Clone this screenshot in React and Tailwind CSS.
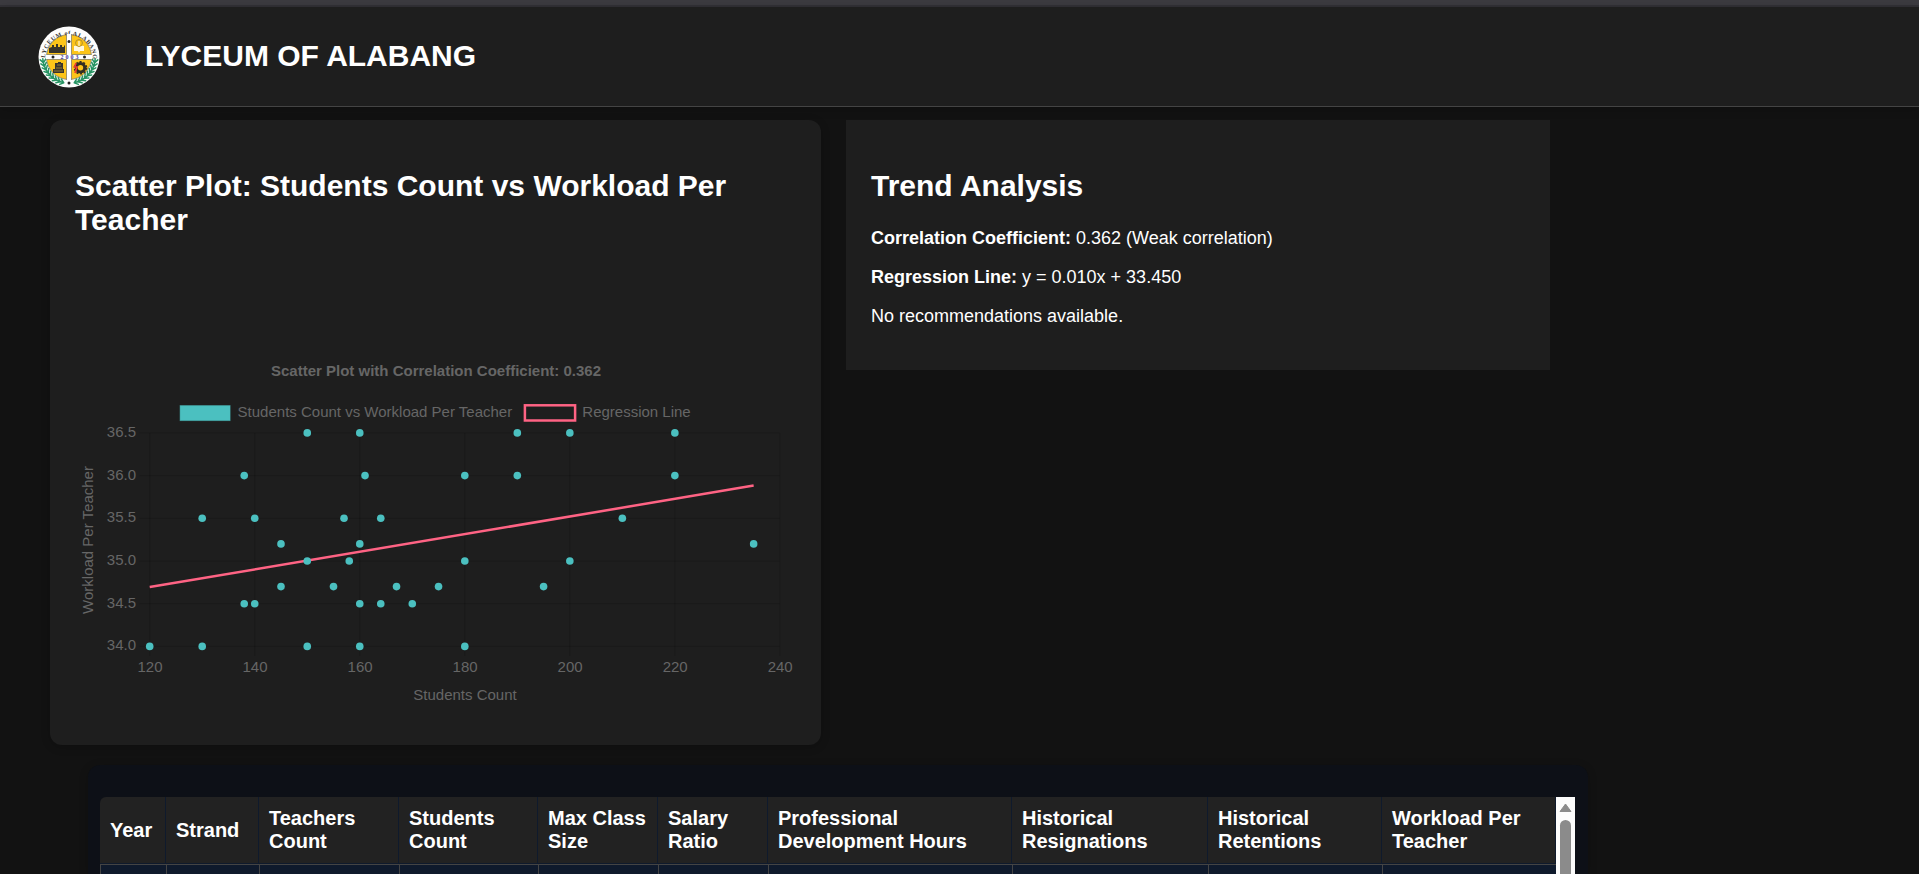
import React from "react";

const points = [
  [120, 34], [130, 34], [150, 34], [160, 34], [180, 34],
  [138, 34.5], [140, 34.5], [160, 34.5], [164, 34.5], [170, 34.5],
  [145, 34.7], [155, 34.7], [167, 34.7], [175, 34.7], [195, 34.7],
  [150, 35], [158, 35], [180, 35], [200, 35],
  [145, 35.2], [160, 35.2], [235, 35.2],
  [130, 35.5], [140, 35.5], [157, 35.5], [164, 35.5], [210, 35.5],
  [138, 36], [161, 36], [180, 36], [190, 36], [220, 36],
  [150, 36.5], [160, 36.5], [190, 36.5], [200, 36.5], [220, 36.5],
];
const xTicks = [120, 140, 160, 180, 200, 220, 240];
const yTicks = [34, 34.5, 35, 35.5, 36, 36.5];
const px = (v) => 74.7 + (v - 120) * 5.2517;
const py = (v) => 301.4 - (v - 34) * 85.4;

function ScatterChart() {
  return (
    <svg width="721" height="375" viewBox="0 0 721 375" className="block text-[15px]" fill="#666666">
      <text x="361" y="31" textAnchor="middle" fontWeight="700">Scatter Plot with Correlation Coefficient: 0.362</text>
      <rect x="105.1" y="60.6" width="50" height="15" fill="#4bc0c0" stroke="#4bc0c0" strokeOpacity="0.5" strokeWidth="1" />
      <text x="162.6" y="72">Students Count vs Workload Per Teacher</text>
      <rect x="449.9" y="60.3" width="50.2" height="15.2" fill="none" stroke="#ff6384" strokeWidth="2.5" />
      <text x="507.3" y="72">Regression Line</text>
      <g stroke="#000000" strokeOpacity="0.13" strokeWidth="1.25">
        {xTicks.map((t) => <line key={t} x1={px(t)} x2={px(t)} y1="88" y2="311" />)}
        {yTicks.map((t) => <line key={t} x1="64.5" x2="704.6" y1={py(t)} y2={py(t)} />)}
      </g>
      {yTicks.map((t) => <text key={t} x="61" y={py(t) + 4} textAnchor="end">{t.toFixed(1)}</text>)}
      {xTicks.map((t) => <text key={t} x={px(t) + 0.3} y="327.4" textAnchor="middle">{t}</text>)}
      <text x="390" y="355" textAnchor="middle">Students Count</text>
      <text transform="translate(17.6 195) rotate(-90)" textAnchor="middle">Workload Per Teacher</text>
      <line x1={px(120)} y1="242.1" x2={px(235)} y2="140.6" stroke="#ff6384" strokeWidth="2.5" />
      {points.map(([x, y]) => <circle key={x + "-" + y} cx={px(x)} cy={py(y)} r="3.8" fill="#4bc0c0" />)}
    </svg>
  );
}

const leaves = [0, 1, 2, 3, 4, 5, 6, 7, 8].map((i) => {
  const angle = 172 - i * 8.2;
  const rad = (angle * Math.PI) / 180;
  return { x: 31 + 26.2 * Math.cos(rad), y: 31 + 26.2 * Math.sin(rad), angle };
});

function Laurel() {
  return leaves.map(({ x, y, angle }) => (
    <g key={angle} transform={`translate(${x} ${y}) rotate(${angle - 90})`}>
      <path d="M2.2 0L-1.2 -2.9M2.2 0L-1.2 2.7M2.2 0H-2" stroke="#279463" strokeWidth="1.5" strokeLinecap="round" fill="none" />
    </g>
  ));
}

function Logo() {
  return (
    <svg width="62" height="62" viewBox="0 0 62 62" className="block shrink-0">
      <defs>
        <path id="ring" d="M7 33 A24 24 0 1 1 55 33" />
      </defs>
      <circle cx="31" cy="31" r="30.5" fill="#fdfdfd" />
      <circle cx="31" cy="31" r="22.5" fill="#fcc419" stroke="#77705c" strokeWidth="0.7" />
      <text fontSize="6" fontWeight="700" fill="#333333" className="font-[Liberation_Serif,serif]">
        <textPath href="#ring" startOffset="1" textLength="74">LYCEUM of ALABANG</textPath>
      </text>
      <Laurel />
      <g transform="translate(62 0) scale(-1 1)"><Laurel /></g>
      <path d="M28.7 8H33.3V54H28.7ZM8 28.7H54V33.3H8Z" fill="#ffffff" />
      <path d="M28.5 8V28.5H8.5M33.5 8V28.5H53.5M28.5 54V33.5H8.5M33.5 54V33.5H53.5" stroke="#77776f" strokeWidth="0.7" fill="none" />
      <path d="M11 27V22L14 21V19H16V21H18V18H20V21H22V19H24V21H26V19L27 20V27Z" fill="#38352a" />
      <path d="M36 20Q39 19 41 21Q43 19 46 20V25H42L41 27L40 25H36Z" fill="#fff8df" />
      <circle cx="41" cy="17" r="3.4" fill="none" stroke="#a8892e" strokeWidth="0.9" />
      <path d="M41 15V20" stroke="#fff" strokeWidth="1" />
      <path d="M17 37H20V36H23V37H25V43H26V47H15V43H17Z" fill="#39352e" />
      <path d="M19 39H23M18 42H24M16 45H25" stroke="#a98b35" strokeWidth="0.8" />
      <circle cx="42.5" cy="41.8" r="4.2" fill="none" stroke="#332d22" strokeWidth="3" />
      <circle cx="42.5" cy="41.8" r="6" fill="none" stroke="#332d22" strokeWidth="1.6" strokeDasharray="2 1.8" />
      <path d="M38 37L36.5 41H39L37 47" stroke="#ef3c32" strokeWidth="1.7" fill="none" />
      <text x="31.5" y="33.1" fontSize="6" fontWeight="700" textAnchor="middle" textLength="18" fill="#3d359a" className="font-[Liberation_Serif,serif]">2003</text>
      <g fill="#222222">
        <circle cx="15" cy="31" r="1.5" />
        <circle cx="46.5" cy="31" r="1.5" />
        <circle cx="31" cy="15.5" r="1.5" />
        <circle cx="31" cy="57" r="1.5" />
      </g>
    </svg>
  );
}

const columns = [
  ["Year", "w-[66px]"],
  ["Strand", "w-[93px]"],
  ["Teachers Count", "w-[140px]"],
  ["Students Count", "w-[139px]"],
  ["Max Class Size", "w-[120px]"],
  ["Salary Ratio", "w-[110px]"],
  ["Professional Development Hours", "w-[244px]"],
  ["Historical Resignations", "w-[196px]"],
  ["Historical Retentions", "w-[174px]"],
  ["Workload Per Teacher", "w-[174px]"],
];

function DataTable() {
  return (
    <section className="ml-[88px] mt-5 flex h-[109px] w-[1500px] overflow-hidden rounded-t-xl bg-[#0d1017] pl-3 pt-8 shadow-[0_2px_10px_rgba(0,0,0,0.2)]">
      <div className="h-full w-[1456px] overflow-hidden rounded-tl-md">
        <div className="flex h-[67px] border-b border-[#0f1a2c] bg-[#222222]">
          {columns.map(([label, width]) => (
            <div key={label} className={`${width} flex shrink-0 items-center border-r border-[#0f1a2c] pl-2.5 pr-2 text-xl leading-[23px] font-bold text-white`}>
              {label}
            </div>
          ))}
        </div>
        <div className="flex h-3 border-l border-t border-[#444444] bg-[#0f1a2c]">
          {columns.map(([label, width]) => (
            <div key={label} className={`${width} shrink-0 border-r border-[#444444]`} />
          ))}
        </div>
      </div>
      <div className="flex h-full w-[19px] flex-col items-center overflow-hidden bg-[#fcfcfc] pt-1.5">
        <svg width="13" height="10" viewBox="0 0 13 10" className="block shrink-0"><path d="M6.5 1L12 8.5H1Z" fill="#8b8b8b" stroke="#8b8b8b" strokeLinejoin="round" /></svg>
        <div className="mt-[7px] h-24 w-[11px] shrink-0 rounded-full bg-[#8b8b8b]" />
      </div>
    </section>
  );
}

export default function App() {
  return (
    <div className="h-[874px] overflow-hidden bg-[#121212] font-[Liberation_Sans,Arial,sans-serif] text-white">
      <div className="h-[7px] border-b-2 border-[#323136] bg-[#3c3b40]" />
      <header className="flex h-[100px] items-center border-b border-[#444444] bg-[#1e1e1e] pl-[38px] shadow-[0_2px_10px_rgba(0,0,0,0.2)]">
        <Logo />
        <h1 className="ml-[45px] pb-px text-[30px] leading-[34px] font-bold">LYCEUM OF ALABANG</h1>
      </header>
      <main>
        <div className="flex items-start gap-[25px] pl-[50px] pt-[13px]">
          <section className="h-[625px] w-[771px] rounded-xl bg-[#1e1e1e] px-[25px] pt-[49px] shadow-[0_2px_10px_rgba(0,0,0,0.2)]">
            <h2 className="text-[30px] leading-[34px] font-bold">Scatter Plot: Students Count vs Workload Per Teacher</h2>
            <div className="mt-[108px]">
              <ScatterChart />
            </div>
          </section>
          <section className="h-[250px] w-[704px] bg-[#1e1e1e] px-[25px] pt-[49px]">
            <h2 className="text-[30px] leading-[34px] font-bold">Trend Analysis</h2>
            <div className="mt-[25px] flex flex-col gap-[19px] text-[18px] leading-5">
              <p><strong>Correlation Coefficient:</strong> 0.362 (Weak correlation)</p>
              <p><strong>Regression Line:</strong> y = 0.010x + 33.450</p>
              <p>No recommendations available.</p>
            </div>
          </section>
        </div>
        <DataTable />
      </main>
    </div>
  );
}
